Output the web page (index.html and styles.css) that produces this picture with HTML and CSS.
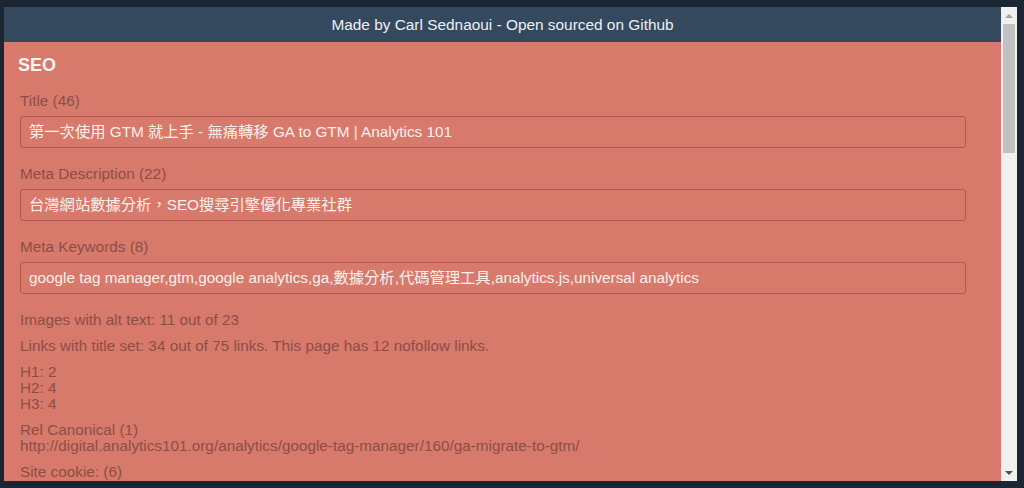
FILE: index.html
```html
<!DOCTYPE html>
<html>
<head>
<meta charset="utf-8">
<link rel="stylesheet" href="styles.css">
</head>
<body>
<div class="frame">
  <div class="window">
    <div class="main">
      <div class="topbar">Made by Carl Sednaoui - Open sourced on Github</div>
      <div class="content">
        <h2 class="section-title">SEO</h2>
        <div class="field">
          <div class="label">Title (46)</div>
          <div class="input">第一次使用 GTM 就上手 - 無痛轉移 GA to GTM | Analytics 101</div>
        </div>
        <div class="field">
          <div class="label">Meta Description (22)</div>
          <div class="input">台灣網站數據分析，SEO搜尋引擎優化專業社群</div>
        </div>
        <div class="field">
          <div class="label">Meta Keywords (8)</div>
          <div class="input">google tag manager,gtm,google analytics,ga,數據分析,代碼管理工具,analytics.js,universal analytics</div>
        </div>
        <div class="stats">
          <p class="info">Images with alt text: 11 out of 23</p>
          <p class="info">Links with title set: 34 out of 75 links. This page has 12 nofollow links.</p>
          <p class="info">H1: 2<br>H2: 4<br>H3: 4</p>
          <p class="info">Rel Canonical (1)<br>http://digital.analytics101.org/analytics/google-tag-manager/160/ga-migrate-to-gtm/</p>
          <p class="info">Site cookie: (6)</p>
        </div>
      </div>
    </div>
    <div class="scrollbar">
      <div class="arrow arrow-up"></div>
      <div class="track"><div class="thumb"></div></div>
      <div class="arrow arrow-down"></div>
    </div>
  </div>
</div>
</body>
</html>
```
FILE: styles.css
```css
html, body {
  margin: 0;
  padding: 0;
  height: 100%;
  background: #1c2632;
}
body {
  font-family: "Liberation Sans", Arial, "Noto Sans CJK TC", sans-serif;
}
.frame {
  box-sizing: border-box;
  height: 488px;
  padding: 7px 7px 7px 4px;
}
.window {
  display: flex;
  height: 100%;
}
.main {
  flex: 1;
  display: flex;
  flex-direction: column;
  background: #d77a6c;
  overflow: hidden;
}
.topbar {
  flex: 0 0 35px;
  background: #34495e;
  color: #edf0f4;
  font-size: 15.4px;
  line-height: 35px;
  text-align: center;
}
.content {
  padding: 12px 35px 0 14px;
}
.section-title {
  margin: 0 0 17px 0;
  color: #fdf3f1;
  font-size: 18px;
  font-weight: bold;
  line-height: 22px;
}
.field {
  margin-bottom: 18px;
  padding-left: 2px;
}
.field:last-of-type {
  margin-bottom: 17px;
}
.label {
  color: #8d4e46;
  font-size: 15.3px;
  line-height: 16px;
  margin-bottom: 7px;
}
.input {
  height: 30px;
  border: 1px solid #b2584c;
  border-radius: 3px;
  color: #fcefec;
  font-size: 15.3px;
  line-height: 30px;
  padding: 0 8px;
  white-space: nowrap;
  overflow: hidden;
}
.stats {
  padding-left: 2px;
}
.info {
  margin: 0 0 10px 0;
  color: #8d4e46;
  font-size: 15.3px;
  line-height: 16px;
}
.scrollbar {
  flex: 0 0 16px;
  display: flex;
  flex-direction: column;
  background: #f0f0f0;
}
.arrow {
  flex: 0 0 17px;
  display: flex;
  align-items: center;
  justify-content: center;
}
.arrow::before {
  content: "";
  width: 0;
  height: 0;
  border-left: 4px solid transparent;
  border-right: 4px solid transparent;
}
.arrow-up::before {
  border-bottom: 4px solid #a3a3a3;
}
.arrow-down::before {
  border-top: 4px solid #505050;
}
.track {
  flex: 1;
  padding: 0 2px;
}
.thumb {
  height: 129px;
  background: #c1c1c1;
}
```
